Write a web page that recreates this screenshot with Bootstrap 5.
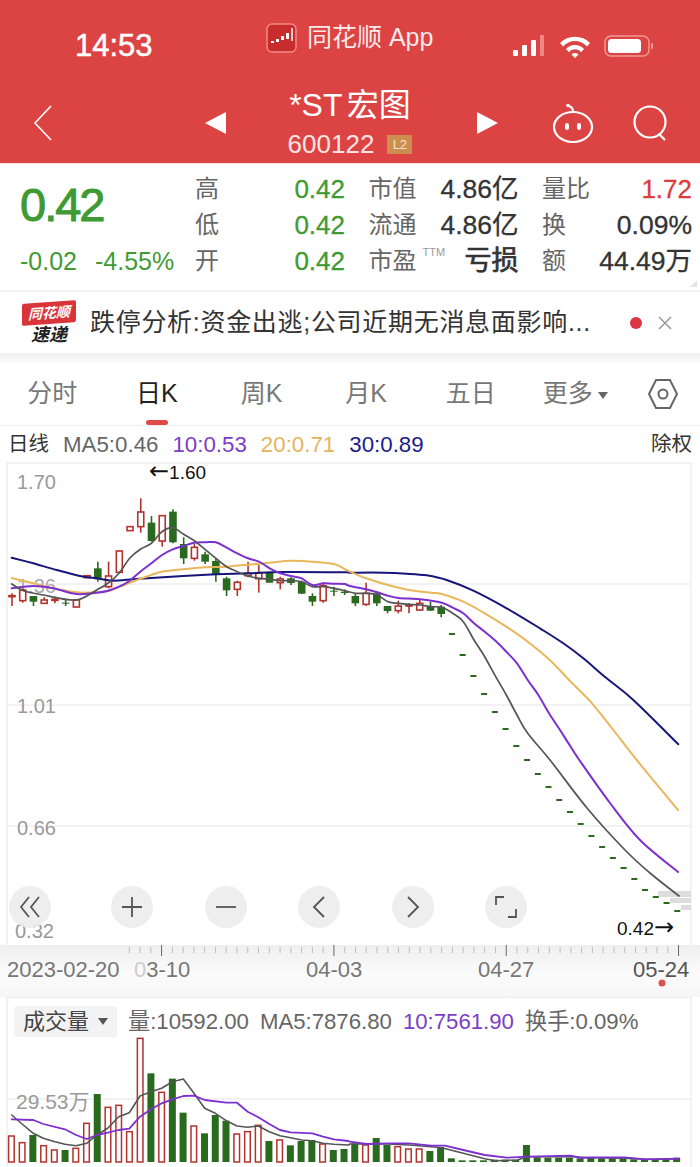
<!DOCTYPE html>
<html lang="zh-CN">
<head>
    <meta charset="UTF-8">
    <title>*ST宏图 K线</title>
    <meta name="viewport" content="width=device-width, initial-scale=1">
    <link href="https://cdn.jsdelivr.net/npm/bootstrap@5.3.0/dist/css/bootstrap.min.css" rel="stylesheet">
    <style>
        body {
            width: 700px;
            height: 1167px;
            overflow: hidden;
            background: #fff;
            font-family: "Liberation Sans", "Noto Sans CJK SC", sans-serif;
            color: #333;
        }
        .app-head { height: 164px; background: #dc4343; border-bottom: 1px solid #fbe6e0; color: #fff; }
        .status-row { height: 76px; padding-left: 75px; }
        .clock { width: 191px; margin-top: 16px; font-size: 31px; -webkit-text-stroke: .5px #fff; color: #fff; }
        .app-name { width: 247px; font-size: 25px; color: #fbeaea; gap: 10px; }
        .status-icons { margin-top: 16px; }
        .nav-row { height: 87px; padding-left: 33px; }
        .nav-icon { margin-top: 6px; }
        .stock-box { width: 200px; margin: 0 27px 0 24px; padding-top: 9px; text-align: center; }
        .stock-name { font-size: 32px; line-height: 40px; word-spacing: -4px; }
        .stock-code { font-size: 26px; line-height: 38px; gap: 13px; color: #fbe3e3; }
        .l2-tag { width: 25px; height: 19px; background: #cd8f4f; font-size: 13px; line-height: 19px; color: #f7e3c8; }

        .quote-panel { height: 126px; }
        .price-box { width: 195px; padding-left: 20px; color: #3f9a34; }
        .price-big { font-size: 47px; line-height: 82px; letter-spacing: -2px; -webkit-text-stroke: 1px #3f9a34; }
        .price-sub { font-size: 25px; line-height: 30px; white-space: nowrap; gap: 18px; }
        .quote-grid { grid-template-columns: repeat(3, 150px); column-gap: 23.5px; grid-auto-rows: 36px; padding-top: 7px; }
        .quote-cell { line-height: 36px; font-size: 26.5px; -webkit-text-stroke: .3px; }
        .quote-key { font-size: 24px; color: #666; -webkit-text-stroke: 0; }
        .quote-key sup { top: -13px; margin-left: 6px; font-size: 11px; line-height: 0; color: #999; }
        .quote-green { color: #3f9a34; font-size: 26px; }
        .quote-red { color: #dc3b3b; font-size: 26px; }
        .loss-text { font-size: 27px; -webkit-text-stroke: .7px; }
        .corner-mark { right: 3px; bottom: 3px; width: 0; height: 0; border-left: 7px solid transparent; border-bottom: 7px solid #e4e4e4; }

        .news-row { height: 63px; border-top: 2px solid #f5f5f5; padding-left: 22px; }
        .news-logo { width: 54px; margin-right: 14px; font-style: italic; font-weight: 700; text-align: center; line-height: 1; }
        .news-logo-top { display: block; background: #d9343a; color: #fff; font-size: 14px; padding: 4px 0; transform: skewY(-4deg); border-radius: 2px; }
        .news-logo-bot { display: block; font-size: 18px; margin-top: 2px; color: #222; }
        .news-text { width: 510px; font-size: 25px; letter-spacing: .7px; white-space: nowrap; color: #333; }
        .news-dot { width: 12px; height: 12px; margin: 0 16px 0 30px; background: #dc3545; }
        .band-gap { height: 9px; background: linear-gradient(#f1f1f1, #fafafa); }

        .tab-row { height: 64px; border-bottom: 1px solid #eee; font-size: 25px; color: #777; }
        .tab-item { width: 104.6px; line-height: 62px; text-align: center; }
        .tab-active { color: #222; }
        .tab-active::after { content: ""; position: absolute; left: 41px; bottom: 0; width: 22px; height: 5px; border-radius: 3px; background: #e04a45; }
        .more-arrow { display: inline-block; margin-left: 5px; vertical-align: 3px; border-left: 5px solid transparent; border-right: 5px solid transparent; border-top: 7px solid #666; }

        .ma-row { height: 37px; padding: 0 8px; gap: 14px; font-size: 22.3px; color: #666; }
        .ma-label { font-size: 20.500px; color: #333; }
        .ma-purple { color: #7a3ec8; }
        .ma-gold { color: #e6b45a; }
        .ma-navy { color: #1c1c8a; }

        .chart-box { height: 482px; }
        .chart-box svg, .axis-box svg { display: block; }
        #klineChart { overflow: visible; }
        .tool-row { left: 9px; top: 423px; gap: 51.4px; }
        .tool-btn { width: 42px; height: 42px; background: rgba(236,236,236,.9); }
        .tool-first { margin-right: 9px; }

        .axis-box { height: 52px; background: linear-gradient(#efefef, #fbfbfb 55%, #f6f6f6); }
        .vol-box { height: 170px; }
        .vol-box svg { left: 0; top: 0; }
        .vol-head { gap: 11px; padding: 8px 0 0 14px; font-size: 22.2px; color: #666; }
        .vol-pill { width: 103px; height: 31px; gap: 9px; padding-left: 9px; background: #f3f3f3; border-radius: 3px; font-size: 22px; color: #444; }
        .pill-arrow { border-left: 5px solid transparent; border-right: 5px solid transparent; border-top: 7px solid #555; }
        .chart-txt { font-family: "Liberation Sans", "Noto Sans CJK SC", sans-serif; }
        .arrow-glyph { font-family: "DejaVu Sans", sans-serif; }
    </style>
</head>
<body>

<header class="app-head">
    <div class="status-row d-flex align-items-center">
        <div class="clock">14:53</div>
        <div class="app-name d-flex align-items-center">
            <svg width="31" height="30" viewBox="0 0 31 30">
                <rect x="1" y="1" width="29" height="28" rx="5" fill="#c92c2c" stroke="#f08a85" stroke-width="1.5"/>
                <path d="M5 18h3v2H5zM10 16h3v3h-3zM15 13h3v4h-3zM20 10h3v6h-3z" fill="#fff"/>
                <path d="M26 5v13" stroke="#fff" stroke-width="1.500"/>
            </svg>
            <span>同花顺 App</span>
        </div>
        <svg class="status-icons" width="140" height="24" viewBox="0 0 140 24" fill="#fff">
            <rect x="0" y="16" width="5" height="6" rx="1"/>
            <rect x="9" y="11" width="5" height="11" rx="1"/>
            <rect x="18" y="6" width="5" height="16" rx="1"/>
            <rect x="27" y="1" width="4" height="21" rx="1" fill="#ee8a85"/>
            <path d="M47 9a21 21 0 0 1 30 0l-3 3.5a16 16 0 0 0-24 0zM53 15a12 12 0 0 1 18 0l-3 3.3a7.500 7.500 0 0 0-12 0zM58.500 20.500a5 5 0 0 1 7 0L62 24z"/>
            <rect x="92" y="2" width="44" height="20" rx="6" fill="none" stroke="#f09a95" stroke-width="1.500"/>
            <rect x="95" y="5" width="33" height="14" rx="3.500"/>
            <rect x="138" y="9" width="2" height="6" rx="1" fill="#f09a95"/>
        </svg>
    </div>
    <div class="nav-row d-flex align-items-center">
        <svg class="nav-icon" width="20" height="36" viewBox="0 0 20 36"><path d="M18 1 2 18l16 17" fill="none" stroke="#fff" stroke-width="1.600"/></svg>
        <svg class="nav-icon" width="21" height="22" viewBox="0 0 21 22" style="margin-left:152px"><path d="M21 0v22L0 11z" fill="#fff"/></svg>
        <div class="stock-box">
            <div class="stock-name">*ST 宏图</div>
            <div class="stock-code d-flex justify-content-center align-items-center">
                <span>600122</span><span class="l2-tag">L2</span>
            </div>
        </div>
        <svg class="nav-icon" width="21" height="22" viewBox="0 0 21 22"><path d="M0 0v22l21-11z" fill="#fff"/></svg>
        <svg class="nav-icon" width="42" height="40" viewBox="0 0 42 40" style="margin-left:54px" fill="none" stroke="#fff" stroke-width="2.200">
            <ellipse cx="21" cy="24" rx="19" ry="15"/>
            <path d="M21 9c0-3-1-5-4-6"/>
            <circle cx="16" cy="2.500" r="1.800" fill="#fff" stroke="none"/>
            <rect x="13" y="20" width="4" height="7" rx="2" fill="#fff" stroke="none"/>
            <rect x="25" y="20" width="4" height="7" rx="2" fill="#fff" stroke="none"/>
        </svg>
        <svg class="nav-icon" width="38" height="36" viewBox="0 0 38 36" style="margin-left:38px" fill="none" stroke="#fff" stroke-width="2.200">
            <circle cx="18" cy="17" r="15.500"/><path d="m27 29 6 6"/>
        </svg>
    </div>
</header>

<section class="quote-panel d-flex position-relative">
    <div class="price-box">
        <div class="price-big">0.42</div>
        <div class="price-sub d-flex"><span>-0.02</span><span>-4.55%</span></div>
    </div>
    <div class="quote-grid d-grid">
        <div class="quote-cell d-flex justify-content-between"><span class="quote-key">高</span><span class="quote-green">0.42</span></div>
        <div class="quote-cell d-flex justify-content-between"><span class="quote-key">市值</span><span>4.86亿</span></div>
        <div class="quote-cell d-flex justify-content-between"><span class="quote-key">量比</span><span class="quote-red">1.72</span></div>
        <div class="quote-cell d-flex justify-content-between"><span class="quote-key">低</span><span class="quote-green">0.42</span></div>
        <div class="quote-cell d-flex justify-content-between"><span class="quote-key">流通</span><span>4.86亿</span></div>
        <div class="quote-cell d-flex justify-content-between"><span class="quote-key">换</span><span>0.09%</span></div>
        <div class="quote-cell d-flex justify-content-between"><span class="quote-key">开</span><span class="quote-green">0.42</span></div>
        <div class="quote-cell d-flex justify-content-between"><span class="quote-key">市盈<sup>TTM</sup></span><span class="loss-text">亏损</span></div>
        <div class="quote-cell d-flex justify-content-between"><span class="quote-key">额</span><span>44.49万</span></div>
    </div>
    <span class="corner-mark position-absolute"></span>
</section>

<section class="news-row d-flex align-items-center">
    <div class="news-logo">
        <span class="news-logo-top">同花顺</span>
        <span class="news-logo-bot">速递</span>
    </div>
    <div class="news-text">跌停分析:资金出逃;公司近期无消息面影响...</div>
    <span class="news-dot rounded-circle"></span>
    <svg width="14" height="14" viewBox="0 0 14 14"><path d="m1 1 12 12M13 1 1 13" stroke="#999" stroke-width="1.500"/></svg>
</section>
<div class="band-gap"></div>

<nav class="tab-row d-flex">
    <div class="tab-item">分时</div>
    <div class="tab-item tab-active position-relative">日K</div>
    <div class="tab-item">周K</div>
    <div class="tab-item">月K</div>
    <div class="tab-item">五日</div>
    <div class="tab-item">更多<span class="more-arrow"></span></div>
    <div class="d-flex align-items-center justify-content-center" style="width:70px">
        <svg width="30" height="32" viewBox="0 0 30 32" fill="none" stroke="#666" stroke-width="2">
            <path d="M8 2h14l7 14-7 14H8L1 16z"/><circle cx="15" cy="16" r="4.500"/>
        </svg>
    </div>
</nav>

<div class="ma-row d-flex align-items-center">
    <span class="ma-label">日线</span>
    <span>MA5:0.46</span>
    <span class="ma-purple">10:0.53</span>
    <span class="ma-gold">20:0.71</span>
    <span class="ma-navy">30:0.89</span>
    <span class="ma-label ms-auto">除权</span>
</div>

<section class="chart-box position-relative">
    <svg id="klineChart" width="700" height="482" viewBox="0 463 700 482"></svg>
    <div class="tool-row d-flex position-absolute">
        <div class="tool-btn tool-first rounded-circle d-flex align-items-center justify-content-center">
            <svg width="22" height="22" viewBox="0 0 22 22" fill="none" stroke="#555" stroke-width="1.800"><path d="M10 1 2 11l8 10M20 1l-8 10 8 10"/></svg>
        </div>
        <div class="tool-btn rounded-circle d-flex align-items-center justify-content-center">
            <svg width="22" height="22" viewBox="0 0 22 22" stroke="#555" stroke-width="1.800"><path d="M11 1v20M1 11h20"/></svg>
        </div>
        <div class="tool-btn rounded-circle d-flex align-items-center justify-content-center">
            <svg width="22" height="22" viewBox="0 0 22 22" stroke="#555" stroke-width="1.800"><path d="M1 11h20"/></svg>
        </div>
        <div class="tool-btn rounded-circle d-flex align-items-center justify-content-center">
            <svg width="14" height="22" viewBox="0 0 14 22" fill="none" stroke="#555" stroke-width="1.800"><path d="M12 1 2 11l10 10"/></svg>
        </div>
        <div class="tool-btn rounded-circle d-flex align-items-center justify-content-center">
            <svg width="14" height="22" viewBox="0 0 14 22" fill="none" stroke="#555" stroke-width="1.800"><path d="m2 1 10 10L2 21"/></svg>
        </div>
        <div class="tool-btn rounded-circle d-flex align-items-center justify-content-center">
            <svg width="24" height="24" viewBox="0 0 24 24" fill="none" stroke="#555" stroke-width="1.800"><path d="M10 2H2v8M14 22h8v-8"/></svg>
        </div>
    </div>
</section>

<div class="axis-box">
    <svg id="axisChart" width="700" height="52" viewBox="0 945 700 52"></svg>
</div>

<section class="vol-box position-relative">
    <svg id="volChart" class="position-absolute" width="700" height="170" viewBox="0 997 700 170"></svg>
    <div class="vol-head d-flex align-items-center position-relative">
        <div class="vol-pill d-flex align-items-center"><span>成交量</span><span class="pill-arrow"></span></div>
        <span>量:10592.00</span>
        <span>MA5:7876.80</span>
        <span class="ma-purple">10:7561.90</span>
        <span>换手:0.09%</span>
    </div>
</section>

<script>
    const RED = '#b3322c', GREEN = '#2a6a1e';
    const GRAY_LINE = '#555', PURPLE_LINE = '#7d2fd0', GOLD_LINE = '#e8b75a', NAVY_LINE = '#15157a';
    const stepX = i => 12 + i * 10.73;

    // zoomed reading -> page pixels
    const upper = (x, y) => [x / 3, y / 3 + 460];
    const lower = (x, y) => [x / 3 + 350, y / 3 + 560];
    const volL = (x, y) => [x / 3, y / 3 + 1000];
    const volR = (x, y) => [x / 3 + 350, y / 3 + 1000];

    function pts(list, fn) {
        return list.map(p => fn(p[0], p[1]));
    }
    function polyline(points, color, width) {
        const d = points.map(p => p[0].toFixed(1) + ',' + p[1].toFixed(1)).join(' ');
        return `<polyline points="${d}" fill="none" stroke="${color}" stroke-width="${width}" stroke-linejoin="round" stroke-linecap="round"/>`;
    }
    // catmull-rom through the readings, MA lines in the price chart are smooth
    function smooth(points, color, width) {
        let d = 'M' + points[0][0].toFixed(1) + ' ' + points[0][1].toFixed(1);
        for (let i = 0; i < points.length - 1; i++) {
            const p0 = points[i - 1] || points[i], p1 = points[i], p2 = points[i + 1], p3 = points[i + 2] || p2;
            const c1x = p1[0] + (p2[0] - p0[0]) / 6, c1y = p1[1] + (p2[1] - p0[1]) / 6;
            const c2x = p2[0] - (p3[0] - p1[0]) / 6, c2y = p2[1] - (p3[1] - p1[1]) / 6;
            d += `C${c1x.toFixed(1)} ${c1y.toFixed(1)} ${c2x.toFixed(1)} ${c2y.toFixed(1)} ${p2[0].toFixed(1)} ${p2[1].toFixed(1)}`;
        }
        return `<path d="${d}" fill="none" stroke="${color}" stroke-width="${width}" stroke-linecap="round"/>`;
    }
    function label(x, y, text, size, color, anchor) {
        return `<text class="chart-txt" x="${x}" y="${y}" font-size="${size}" fill="${color}" text-anchor="${anchor || 'start'}">${text}</text>`;
    }

    // wick top, body top, body bottom, wick bottom, r/g
    const candlesA = [
        [400,407,409,438,'r'],[385,390,422,428,'r'],[408,408,425,438,'g'],[412,420,430,432,'r'],
        [410,418,420,430,'r'],[420,428,431,438,'g'],[418,420,441,442,'r'],[347,347,353,353,'r'],
        [305,325,358,365,'g'],[305,348,380,385,'r'],[272,273,337,340,'r'],[200,200,212,212,'r'],
        [115,156,200,218,'r'],[168,188,243,245,'g'],[167,167,243,260,'r'],[148,155,247,250,'g'],
        [232,252,295,312,'g'],[252,262,295,302,'r'],[275,283,305,312,'g'],[295,303,345,365,'g'],
        [350,355,391,408,'g'],[362,367,388,408,'r'],[305,340,347,352,'r'],[315,338,356,398,'r'],
        [335,337,368,368,'g'],[350,357,368,388,'r'],[352,355,369,375,'g'],[362,365,401,402,'g'],
        [400,408,425,438,'g'],[368,377,422,428,'r'],[380,392,395,408,'g'],[388,395,399,405,'g']
    ];
    const candlesB = [
        [100,108,130,138,'g'],[68,100,133,138,'r'],[95,100,130,138,'g'],[138,138,153,160,'g'],
        [122,138,152,160,'r'],[130,135,138,160,'r'],[120,130,150,152,'r'],[125,140,152,153,'g'],
        [135,140,162,172,'g']
    ];
    const limitDown = [634,655,676,694,712,729,746,760,774,787,800,812,824,836,847,858,868,879,890,897,903,911];

    function candle(i, c, base) {
        const x = stepX(i), color = c[4] === 'r' ? RED : GREEN;
        const y = v => v / 3 + base;
        let s = `<line x1="${x}" x2="${x}" y1="${y(c[0])}" y2="${y(c[3])}" stroke="${color}" stroke-width="1.600"/>`;
        const h = Math.max(y(c[2]) - y(c[1]), 1);
        if (c[4] === 'r') {
            s += `<rect x="${x - 3}" y="${y(c[1])}" width="6" height="${h}" fill="#fff" stroke="${color}" stroke-width="1.600"/>`;
        } else {
            s += `<rect x="${x - 3.8}" y="${y(c[1])}" width="7.600" height="${h}" fill="${color}"/>`;
        }
        return s;
    }

    function drawKline() {
        let s = '';
        // frame and grid
        s += `<path d="M7 463H691V945M7 463V945" fill="none" stroke="#eee" stroke-width="1.5"/>`;
        [584, 705, 826].forEach(y => { s += `<line x1="7" x2="691" y1="${y}" y2="${y}" stroke="#eee" stroke-width="1.3"/>`; });
        // price labels
        s += label(17, 489, '1.70', 20, '#999');
        s += label(17, 593, '1.36', 20, '#aaa');
        s += label(17, 713, '1.01', 20, '#999');
        s += label(17, 835, '0.66', 20, '#999');
        s += label(15, 938, '0.32', 20, '#999');
        s += label(149, 479, '<tspan class="arrow-glyph" font-size="24">←</tspan>1.60', 19, '#111');
        s += label(617, 935, '0.42<tspan class="arrow-glyph" font-size="24">→</tspan>', 19, '#111');
        // end of chart price marks
        s += `<rect x="658" y="891" width="33" height="6" fill="#ddd"/><rect x="670" y="898" width="21" height="5" fill="#ddd"/><rect x="681" y="905" width="10" height="5" fill="#ddd"/>`;

        candlesA.forEach((c, i) => { s += candle(i, c, 460); });
        candlesB.forEach((c, i) => { s += candle(i + 32, c, 560); });
        limitDown.forEach((y, i) => {
            s += `<rect x="${stepX(i + 41) - 3}" y="${y - 1}" width="6" height="2" fill="${GREEN}"/>`;
        });

        const ma5 = pts([[35,372],[70,392],[130,405],[228,420],[290,390],[324,370],[357,340],[389,295],[421,268],[454,250],[486,215],[518,203],[550,222],[583,242],[615,268],[648,295],[680,320],[712,335],[744,348],[777,355],[809,358],[841,362],[873,362],[905,365],[937,380],[970,380],[1002,385],[1034,392]], upper)
            .concat(pts([[17,100],[49,100],[82,105],[114,125],[146,130],[178,133],[210,135],[243,140],[275,142],[308,160],[340,185],[372,240],[404,290],[437,350],[469,405],[501,465],[533,520],[600,600]], lower))
            .concat([[587,808],[625,850],[650,873],[679,896]]);
        const ma10 = pts([[35,385],[100,378],[160,385],[228,402],[290,398],[324,392],[357,380],[389,362],[421,335],[454,310],[486,285],[518,268],[550,258],[583,248],[615,247],[648,247],[680,263],[712,280],[744,295],[777,305],[809,325],[841,340],[873,348],[905,355],[937,375],[970,370],[1002,371],[1034,372]], upper)
            .concat(pts([[0,78],[49,88],[82,97],[114,107],[146,114],[210,118],[275,128],[308,143],[340,160],[372,190],[404,215],[437,243],[469,275],[501,310],[533,360],[565,405],[597,460],[630,510],[662,560],[688,600]], lower))
            .concat([[610,803],[640,840],[678,872]]);
        const ma20 = pts([[35,354],[100,370],[160,385],[228,397],[290,397],[330,392],[389,368],[454,345],[486,335],[550,328],[615,322],[680,320],[744,314],[809,308],[873,302],[937,305],[1002,312],[1040,330]], upper)
            .concat(pts([[0,35],[49,55],[114,75],[178,90],[243,98],[275,102],[340,125],[404,160],[469,200],[533,245],[597,298],[662,365],[726,430],[790,510],[860,600]], lower))
            .concat([[678,810]]);
        const ma30 = pts([[35,293],[100,310],[170,330],[240,348],[290,355],[340,362],[420,356],[550,348],[650,343],[750,340],[850,336],[1040,337]], upper)
            .concat(pts([[0,38],[100,38],[170,41],[230,46],[290,60],[370,92],[470,145],[570,205],[640,250],[700,295],[770,355],[850,420],[985,553]], lower));
        s += smooth(ma30, NAVY_LINE, 2) + smooth(ma20, GOLD_LINE, 2) + smooth(ma10, PURPLE_LINE, 2) + smooth(ma5, GRAY_LINE, 1.7);
        document.getElementById('klineChart').innerHTML = s;
    }

    function drawAxis() {
        let s = '';
        for (let k = -3; k <= 48; k++) {
            const x = 161.6 + k * 10.77, major = k % 16 === 0;
            s += `<line x1="${x}" x2="${x}" y1="${major ? 945 : 947}" y2="${major ? 956 : 953}" stroke="${major ? '#666' : '#bbb'}" stroke-width="1"/>`;
        }
        s += label(7, 977, '2023-02-20', 22, '#777');
        s += label(134, 977, '<tspan fill="#ccc">0</tspan>3-10', 22, '#777');
        s += label(306, 977, '04-03', 22, '#777');
        s += label(478, 977, '04-27', 22, '#777');
        s += label(633, 977, '05-24', 22, '#555');
        s += `<circle cx="662" cy="983" r="3.5" fill="#d9534f"/>`;
        document.getElementById('axisChart').innerHTML = s;
    }

    function drawVolume() {
        const tops = [408,428,405,437,450,450,445,370,282,322,316,395,115,220,277,236,338,378,400,345,362,402,395,376,423,420,436,423,420,432,450,447,
            430,435,414,435,440,447,447,453,441,475,481,481,481,479,479,479,435,472,473,473,473,475,473,475,475,476,478,478,479,478,473];
        const colors = 'rrgrrgrrgrrrrgrggrggg'.split('').concat('rrrgrgggrgg'.split(''), 'grgg'.split(''), 'rrrgg'.split(''));
        let s = `<path d="M7 997V1167M691 997V1167" stroke="#eee" stroke-width="1.500"/>`;
        s += `<line x1="7" x2="691" y1="997.5" y2="997.5" stroke="#eee"/>`;
        s += `<line x1="7" x2="691" y1="1099" y2="1099" stroke="#eee" stroke-width="1.300"/>`;
        s += label(16, 1109, '29.53万', 21, '#999');
        tops.forEach((t, i) => {
            const x = stepX(i) - 0.6, y = t / 3 + 1000, h = 1162 - y;
            if (colors[i] === 'r') {
                s += `<rect x="${x - 2.8}" y="${y}" width="5.6" height="${h}" fill="#fff" stroke="${RED}" stroke-width="1.500"/>`;
            } else {
                s += `<rect x="${x - 3.5}" y="${y}" width="7" height="${h}" fill="${GREEN}"/>`;
            }
        });
        const ma5 = pts([[35,345],[70,375],[100,400],[130,415],[165,425],[195,433],[228,437],[260,430],[290,405],[323,385],[356,350],[388,338],[420,288],[453,275],[485,265],[517,245],[550,237],[582,280],[614,325],[646,340],[679,362],[711,378],[743,382],[775,378],[808,395],[840,407],[872,413],[905,420],[937,422],[969,430],[1002,433],[1045,435]], volL)
            .concat(pts([[0,432],[50,432],[113,432],[178,435],[243,440],[275,443],[340,460],[404,476],[437,482],[501,480],[533,470],[662,470],[727,473],[823,475],[888,478],[985,477]], volR));
        const ma10 = pts([[35,358],[100,360],[130,372],[195,388],[228,405],[260,417],[291,405],[323,398],[356,390],[388,386],[420,350],[453,328],[485,310],[517,298],[550,288],[582,287],[614,300],[679,308],[711,308],[743,335],[775,352],[808,372],[840,390],[872,397],[937,400],[969,410],[1002,418],[1045,423]], volL)
            .concat(pts([[0,425],[50,432],[113,430],[178,430],[243,437],[285,437],[340,450],[404,465],[470,473],[533,470],[662,467],[694,474],[727,472],[823,472],[888,478],[985,476]], volR));
        s += polyline(ma5, GRAY_LINE, 1.6) + polyline(ma10, PURPLE_LINE, 1.8);
        document.getElementById('volChart').innerHTML = s;
    }

    drawKline();
    drawAxis();
    drawVolume();
</script>
<script src="https://cdn.jsdelivr.net/npm/bootstrap@5.3.0/dist/js/bootstrap.bundle.min.js"></script>
</body>
</html>
